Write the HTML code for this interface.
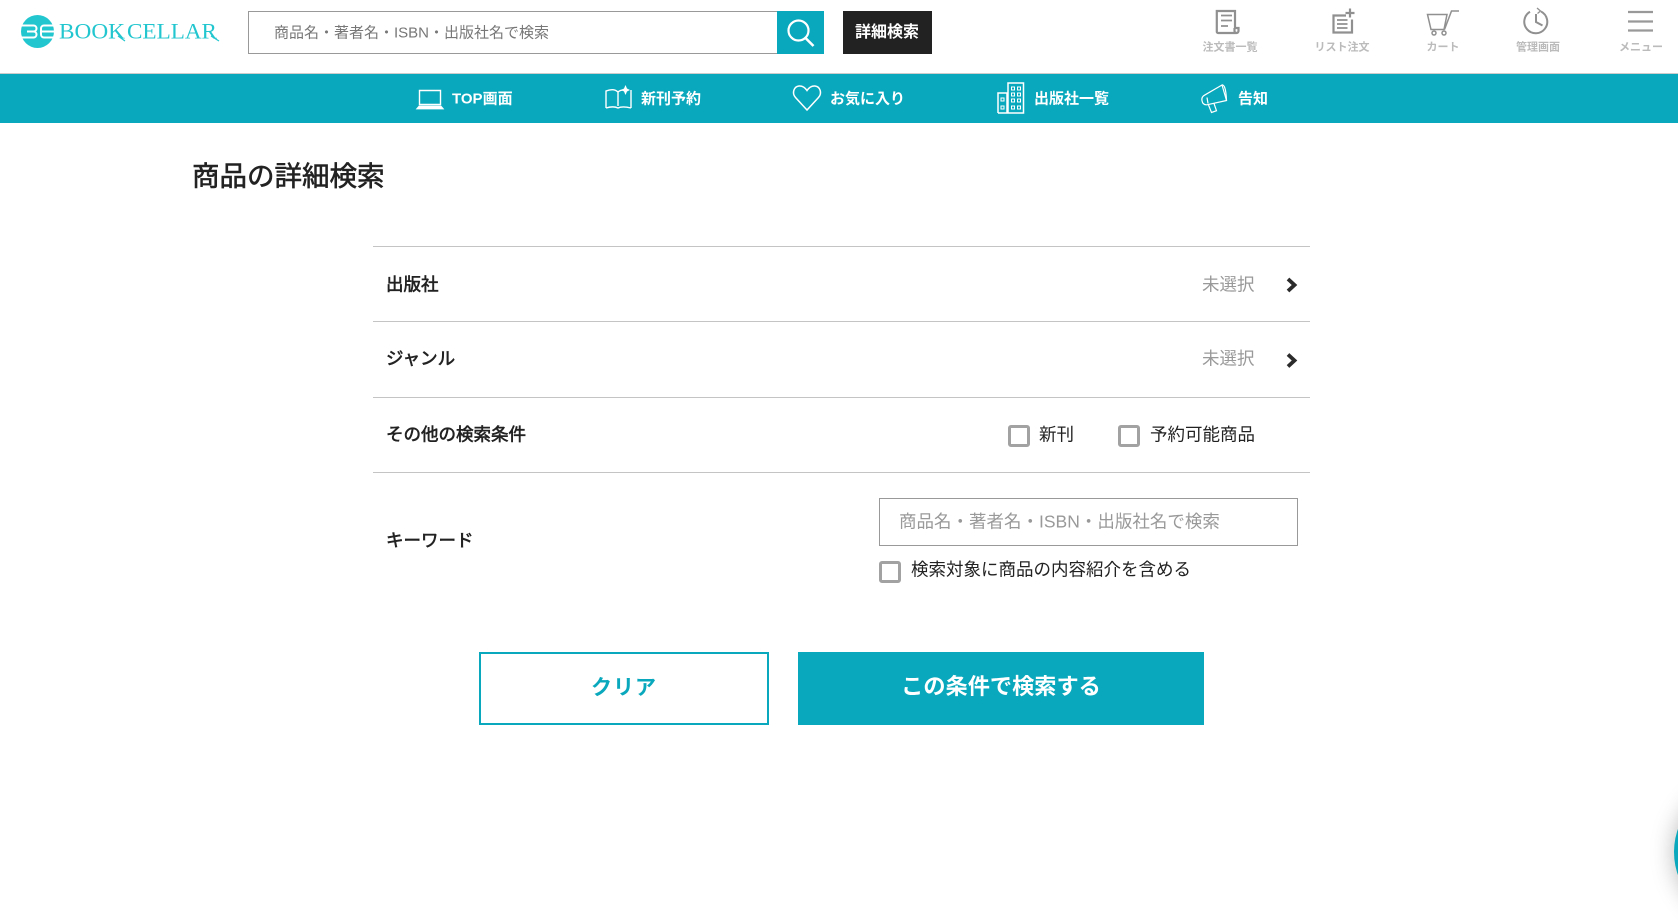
<!DOCTYPE html>
<html lang="ja"><head><meta charset="utf-8"><title>商品の詳細検索</title>
<style>
html,body{margin:0;padding:0;background:#fff}
body{width:1678px;height:853px;position:relative;overflow:hidden;font-family:"Liberation Sans","Noto Sans CJK JP",sans-serif;color:#222}
.a{position:absolute;white-space:nowrap}
.l{position:absolute;left:373px;width:937px;height:1px;background:#c4c4c4}
.t{position:absolute;white-space:nowrap;transform:translateY(-50%);line-height:1}
.nav{color:#fff;font-size:15px;font-weight:700}
.hd{color:#bbb;font-size:11px;font-weight:700;transform:translate(-50%,-50%)}
.lb{font-size:17.5px;font-weight:400;-webkit-text-stroke:.6px #222;left:386px}
.cb{position:absolute;width:16px;height:16px;border:3px solid #a2a2a2;border-radius:3px;background:#fff}
svg{position:absolute;overflow:visible}
</style></head><body>

<!-- logo -->
<svg style="left:0;top:0" width="230" height="60" viewBox="0 0 230 60">
<circle cx="37.5" cy="31.5" r="16.5" fill="#22c6cf"/>
<path d="M21.500 25.500h12a3 3 0 0 1 0 6H27h6.500a3 3 0 0 1 0 6H21.500M53.500 25.500H44a3 3 0 0 0-3 3v6a3 3 0 0 0 3 3h9.500M41 31.500h13" fill="none" stroke="#fff" stroke-width="2"/>
<text x="59" y="38.5" font-family="'Liberation Serif',serif" font-size="22.5" fill="#22c6cf" textLength="66" lengthAdjust="spacingAndGlyphs">BOOK</text>
<text x="127" y="38.5" font-family="'Liberation Serif',serif" font-size="22.5" fill="#22c6cf" textLength="90" lengthAdjust="spacingAndGlyphs">CELLAR</text>
<path d="M118 36l7 5M211 36l8 5" stroke="#22c6cf" stroke-width="1.2" fill="none"/>
</svg>

<!-- search -->
<div class="a" style="left:248px;top:11px;width:529px;height:41px;border:1px solid #999;border-right:0"></div>
<div class="t" style="left:274px;top:33px;font-size:15px;color:#777">商品名・著者名・ISBN・出版社名で検索</div>
<div class="a" style="left:777px;top:11px;width:47px;height:43px;background:#0aa8bc"></div>
<svg style="left:777px;top:11px" width="47" height="43"><circle cx="21.5" cy="19.5" r="10" fill="none" stroke="#fff" stroke-width="2.2"/><path d="M28.5 27l8 8" stroke="#fff" stroke-width="2.6"/></svg>
<div class="a" style="left:843px;top:11px;width:89px;height:43px;background:#222"></div>
<div class="t" style="left:855px;top:33px;font-size:16px;font-weight:700;color:#fff">詳細検索</div>

<!-- header icons -->
<svg style="left:0;top:0" width="1678" height="40" fill="none" stroke="#909090">
<path d="M1236 33h-18a1.200 1.200 0 0 1-1.200-1.200V11h18.200v17M1235 28h3.500v3a2 2 0 0 1-4 0v-3" stroke-width="2.200"/>
<path d="M1221 15.500h11M1221 20.500h11M1221 26h7" stroke-width="1.800"/>
<path d="M1346 15.500h-12.500v17h18.500v-13" stroke-width="2.200"/>
<path d="M1337 20h10.500M1337 24h10.500M1337 28h10.500" stroke-width="1.700"/>
<path d="M1345.500 13h9M1350 8.500v9" stroke-width="2.200"/>
<path d="M1427.500 14.500h19.500l-3 15h-13zM1444.500 29.500l7-18.500h7.500" stroke-width="1.500"/>
<circle cx="1434" cy="33" r="2" stroke-width="1.500"/><circle cx="1444" cy="33" r="2" stroke-width="1.500"/>
<path d="M1541 11.500A11.500 11.500 0 1 1 1530 11.800M1536 14V22l6.500 3.500" stroke-width="2"/>
<path d="M1537 8l3.500 3-3 2.500" stroke-width="1.300"/>
<path d="M1628 12h25M1628 21.500h25M1628 30.500h25" stroke-width="2.300" stroke="#999"/>
</svg>
<div class="t hd" style="left:1230px;top:48px">注文書一覧</div>
<div class="t hd" style="left:1342px;top:48px">リスト注文</div>
<div class="t hd" style="left:1443px;top:48px">カート</div>
<div class="t hd" style="left:1538px;top:48px">管理画面</div>
<div class="t hd" style="left:1641px;top:48px">メニュー</div>

<!-- nav -->
<div class="a" style="left:0;top:73px;width:1678px;height:1px;background:#ccc"></div>
<div class="a" style="left:0;top:74px;width:1678px;height:49px;background:#0aa8bc"></div>
<svg style="left:0;top:74px" width="1678" height="49" fill="none" stroke="#fff" stroke-width="1.400">
<path d="M419.500 16.500h21v14h-21z"/><path d="M419 32h22l2.500 3h-27z" fill="#fff" stroke-width=".8"/>
<path d="M606 34V17c5-2 9-2 12 1 1.500-1.500 3-2 6-2.200M618 18v14M631 16v18M606 34c5-1.500 9-1.500 12 0 3-1.500 7-1.500 13 0"/>
<path d="M625.500 11l1.500 3.500 3 1.500-3 1.500-1.500 3.500-1.500-3.500-3-1.500 3-1.500z" fill="#fff" stroke="none"/>
<path d="M807 36l-11.500-12.500c-4-4.500-1.500-11 3.500-11.500 3.500-.3 6 1.500 8 4.500 2-3 4.500-4.800 8-4.500 5 .5 7.500 7 3.500 11.500z" stroke-width="1.500"/>
<path d="M998 39V19h9v20M1008 39V9h15.500v30H998" stroke-width="1.500"/>
<path d="M1001 24h3v3h-3zM1001 32h3v3h-3zM1011.500 13h3v3h-3zM1017.500 13h3v3h-3zM1011.500 19h3v3h-3zM1017.500 19h3v3h-3zM1011.500 25h3v3h-3zM1017.500 25h3v3h-3zM1011.500 32h3v3h-3zM1017.500 32h3v3h-3z" stroke-width="1"/>
<path d="M1222 11l4.500 15.500-19 4.200c-3 .5-5-1-5.500-4-.5-2.500.5-4.500 2.500-5.500z" stroke-width="1.200"/>
<path d="M1222 11c2-.5 4 3 4.500 15.500M1207 23.500l1 6M1208.500 31l3 7.500 5-1.800-2.500-7.200" stroke-width="1.200"/>
</svg>
<div class="t nav" style="left:452px;top:98.500px">TOP画面</div>
<div class="t nav" style="left:641px;top:98.500px">新刊予約</div>
<div class="t nav" style="left:830px;top:98.500px">お気に入り</div>
<div class="t nav" style="left:1034px;top:98.500px">出版社一覧</div>
<div class="t nav" style="left:1238px;top:98.500px">告知</div>

<!-- title -->
<div class="t" style="left:192px;top:176px;font-size:27.500px;-webkit-text-stroke:.6px #222">商品の詳細検索</div>

<!-- rows -->
<div class="l" style="top:246px"></div>
<div class="l" style="top:321px"></div>
<div class="l" style="top:397px"></div>
<div class="l" style="top:472px"></div>
<div class="t lb" style="top:284.500px">出版社</div>
<div class="t lb" style="top:358.500px">ジャンル</div>
<div class="t lb" style="top:435px">その他の検索条件</div>
<div class="t lb" style="top:540.500px">キーワード</div>
<div class="t" style="left:1202px;top:284.500px;font-size:17.500px;color:#999">未選択</div>
<div class="t" style="left:1202px;top:358.500px;font-size:17.500px;color:#999">未選択</div>
<svg style="left:0;top:0" width="1678" height="400" fill="none" stroke="#2b2b2b" stroke-width="3.800"><path d="M1288 279l6.500 6-6.500 6M1288 354.500l6.500 6-6.500 6"/></svg>

<div class="cb" style="left:1008px;top:425px"></div>
<div class="t" style="left:1039px;top:435px;font-size:17.500px">新刊</div>
<div class="cb" style="left:1118px;top:425px"></div>
<div class="t" style="left:1150px;top:435px;font-size:17.500px">予約可能商品</div>

<div class="a" style="left:879px;top:498px;width:417px;height:46px;border:1px solid #999"></div>
<div class="t" style="left:899px;top:522px;font-size:17.500px;color:#999">商品名・著者名・ISBN・出版社名で検索</div>
<div class="cb" style="left:879px;top:561px"></div>
<div class="t" style="left:911px;top:570px;font-size:17.500px">検索対象に商品の内容紹介を含める</div>

<!-- buttons -->
<div class="a" style="left:479px;top:652px;width:286px;height:69px;border:2px solid #0aa8bc"></div>
<div class="t" style="left:624px;top:688px;font-size:21px;font-weight:700;color:#0aa8bc;transform:translate(-50%,-50%);letter-spacing:1px">クリア</div>
<div class="a" style="left:798px;top:652px;width:406px;height:73px;background:#0aa8bc"></div>
<div class="t" style="left:1001px;top:687px;font-size:22.200px;font-weight:700;color:#fff;transform:translate(-50%,-50%)">この条件で検索する</div>

<!-- floating -->
<div class="a" style="left:1674px;top:782px;width:140px;height:140px;border-radius:50%;background:#0aa8bc;box-shadow:0 0 24px rgba(0,0,0,.28)"></div>
</body></html>
